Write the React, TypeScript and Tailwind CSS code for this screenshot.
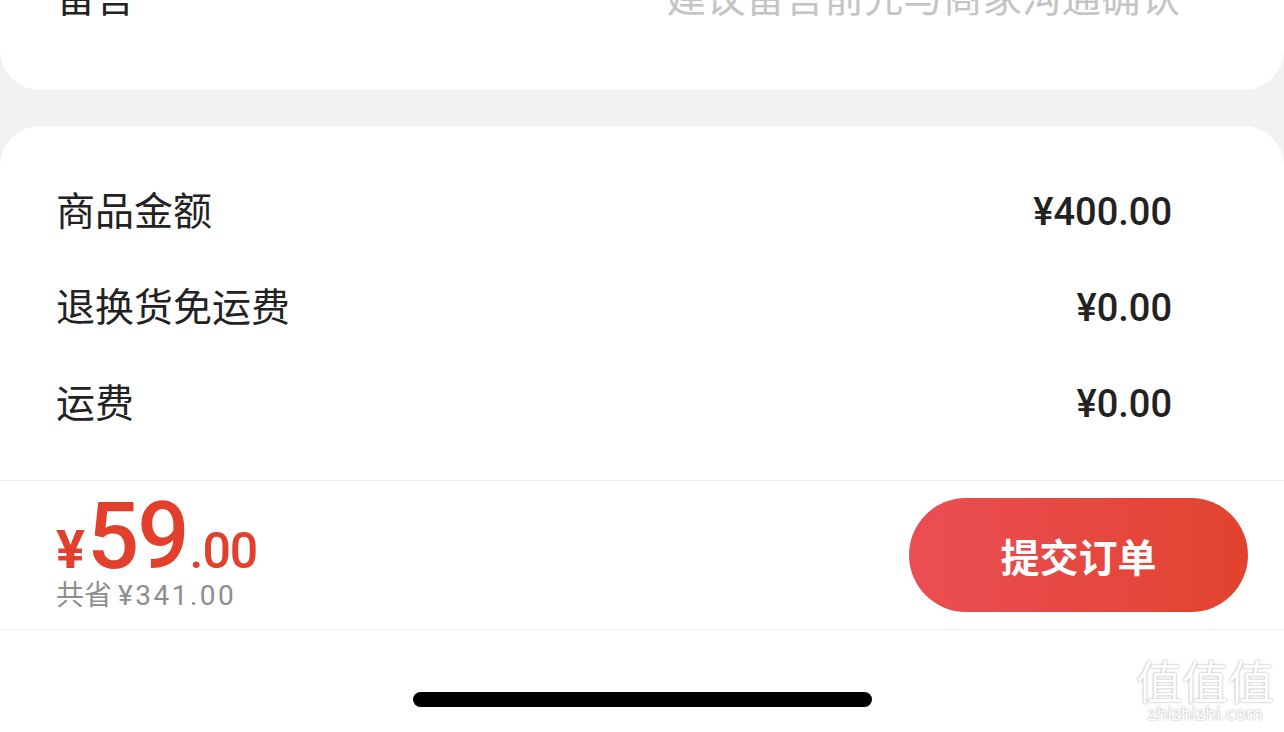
import React from 'react';

const rows = [
  { label: '商品金额', value: '¥400.00' },
  { label: '退换货免运费', value: '¥0.00' },
  { label: '运费', value: '¥0.00' },
];

export default function App() {
  return (
    <div className="relative h-[732px] w-full overflow-hidden bg-[#f2f2f2] font-['Roboto','Noto_Sans_CJK_SC',sans-serif] text-[#222]">
      {/* Remark card (scrolled, top cut off) */}
      <div className="flex h-[90px] flex-col rounded-b-[40px] bg-white">
        <div className="-mt-[27px] flex h-[44px] items-center justify-between pl-[56px] pr-[104px] text-[39.5px] leading-[44px]">
          <span className="font-['Noto_Sans_CJK_SC',sans-serif]">留言</span>
          <span className="font-['Noto_Sans_CJK_SC',sans-serif] text-[#c4c4c4]">建议留言前先与商家沟通确认</span>
        </div>
      </div>

      {/* Price detail card */}
      <div className="mt-[36px] flex flex-col rounded-t-[40px] bg-white">
        <div className="pt-[38px] pb-[28px]">
          {rows.map((r) => (
            <div key={r.label} className="flex h-[96px] items-center justify-between pl-[56px] pr-[112px]">
              <span className="pb-[7px] font-['Noto_Sans_CJK_SC',sans-serif] text-[39px]">{r.label}</span>
              <span className="text-[38px] font-medium">{r.value}</span>
            </div>
          ))}
        </div>

        {/* Submit bar */}
        <div className="flex h-[150px] items-center justify-between border-y border-[#f0f0f0] pl-[56px] pr-[36px]">
          <div className="mb-[7px] flex flex-col">
            <div className="flex items-baseline leading-none text-[#e23f2c]">
              <span className="text-[54px] font-bold">¥</span>
              <span className="ml-[2px] text-[92px] font-medium tracking-[-2px]">59</span>
              <span className="ml-[2px] text-[50px] font-medium tracking-[-1px]">.00</span>
            </div>
            <div className="-mt-[7px] text-[28px] leading-[34px] text-[#8e8e8e]">
              <span className="font-['Noto_Sans_CJK_SC',sans-serif]">共省</span>
              <span className="ml-[6px] tracking-[2.5px]">¥341.00</span>
            </div>
          </div>
          <button className="flex h-[114px] w-[339px] items-center justify-center rounded-full bg-gradient-to-r from-[#ea4e53] to-[#e2432e] font-['Noto_Sans_CJK_SC',sans-serif] text-[39px] font-bold text-white">
            提交订单
          </button>
        </div>

        {/* Home indicator area */}
        <div className="flex h-[200px] justify-center pt-[62px]">
          <div className="h-[15px] w-[459px] rounded-full bg-black" />
        </div>
      </div>

      {/* Watermark */}
      <div className="absolute right-[10px] bottom-[8px] flex flex-col items-center text-white [text-shadow:0_0_2px_rgba(0,0,0,0.45)]">
        <span className="font-['Noto_Sans_CJK_SC',sans-serif] text-[46px] leading-[50px]">值值值</span>
        <span className="font-['DejaVu_Sans',sans-serif] text-[17px] leading-[20px]">zhizhizhi.com</span>
      </div>
    </div>
  );
}
